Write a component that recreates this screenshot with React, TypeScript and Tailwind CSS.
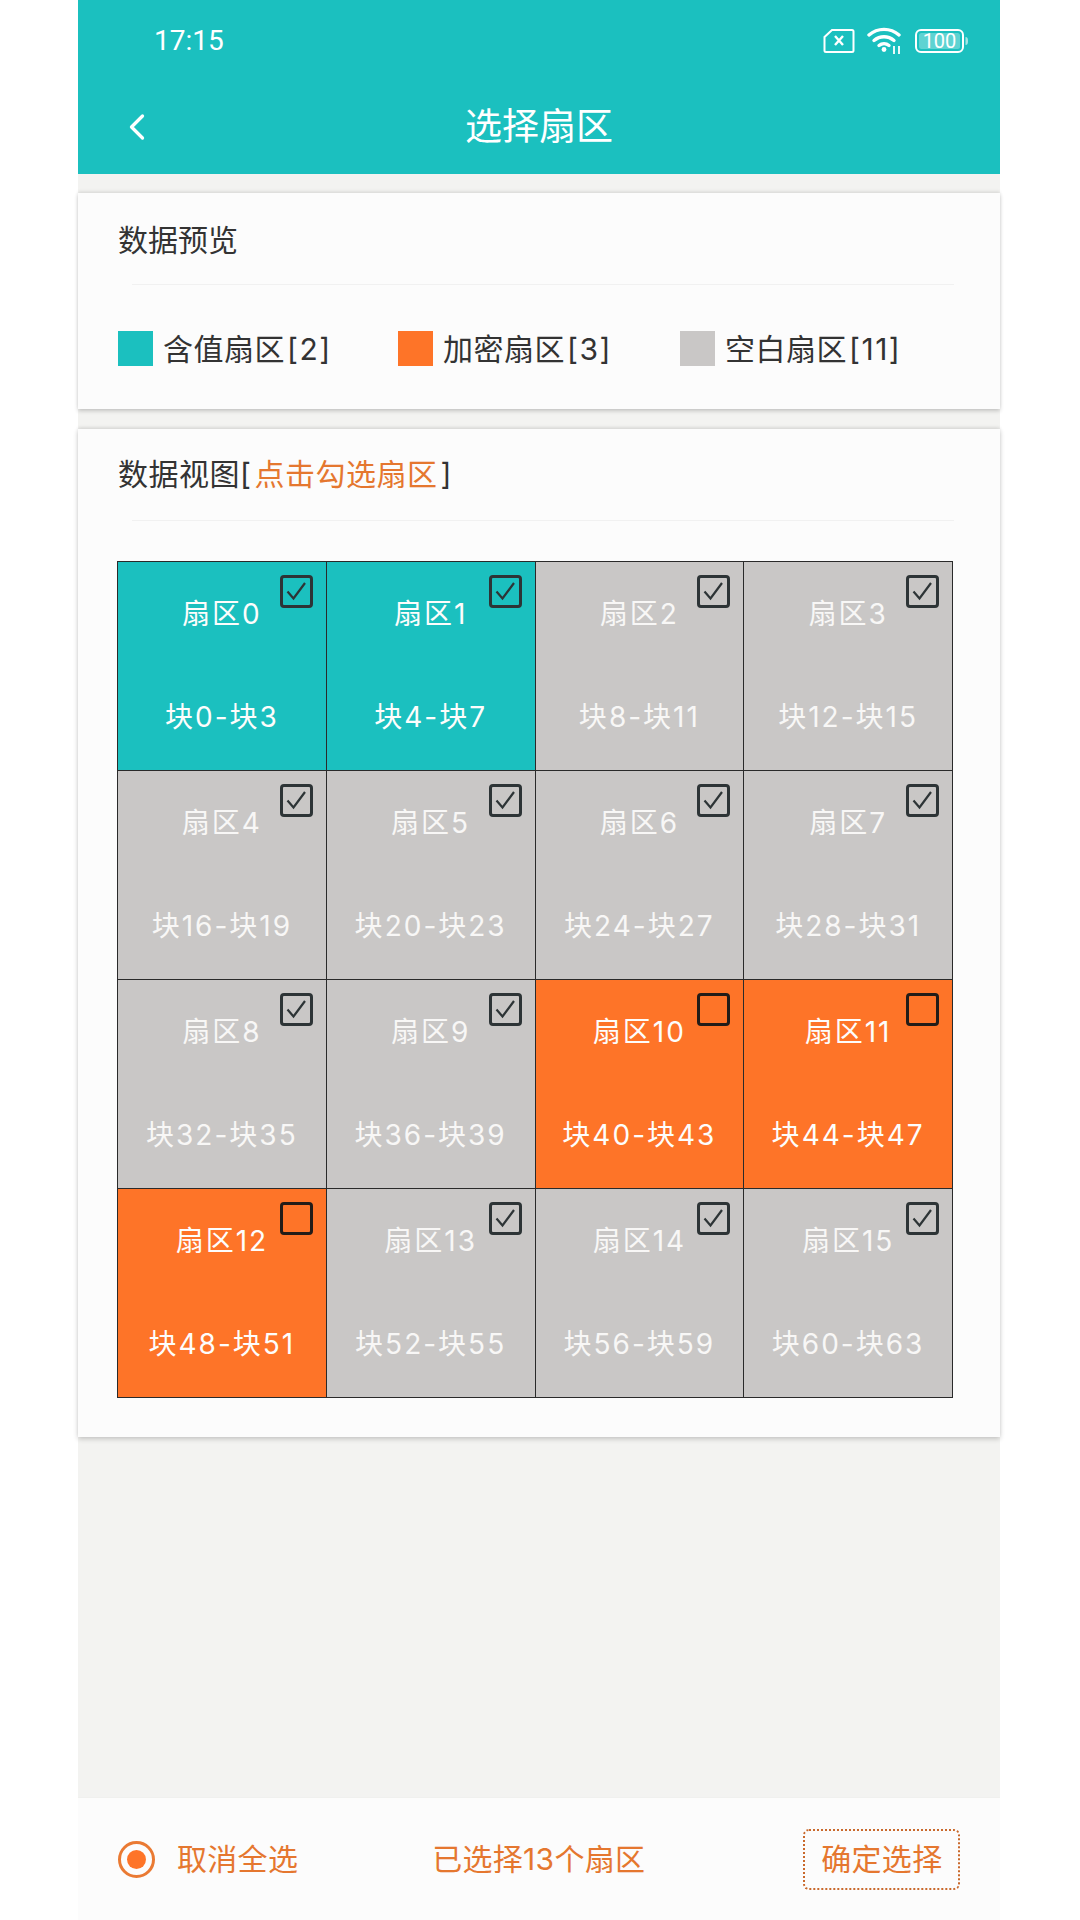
import React from "react";
import { ChevronLeft } from "lucide-react";

type Kind = "value" | "encrypted" | "blank";

const kindBg: Record<Kind, string> = {
  value: "bg-[#1bc0bf]",
  encrypted: "bg-[#fe7428]",
  blank: "bg-[#c9c7c6]",
};

const encrypted = [10, 11, 12];
const sectors = Array.from({ length: 16 }, (_, i) => ({
  id: i,
  kind: (i < 2 ? "value" : encrypted.includes(i) ? "encrypted" : "blank") as Kind,
  checked: !encrypted.includes(i),
}));

const legend = [
  { label: "含值扇区", count: "2", color: "bg-[#1bc0bf]", width: "w-[280px]" },
  { label: "加密扇区", count: "3", color: "bg-[#fe7428]", width: "w-[282px]" },
  { label: "空白扇区", count: "11", color: "bg-[#c9c7c6]", width: "" },
];

const StatusIcons = () => (
  <div className="flex items-center">
    <svg width="32" height="26" viewBox="0 0 32 26" fill="none" stroke="#fff" strokeWidth="2">
      <path d="M9 2h20a1.500 1.500 0 0 1 1.500 1.500v19a1.500 1.500 0 0 1-1.500 1.500H3a1.500 1.500 0 0 1-1.500-1.500V9z" />
      <path d="M12 8l8 9M20 8l-8 9" strokeWidth="2.400" />
    </svg>
    <svg className="ml-[12px]" width="37" height="28" viewBox="0 0 37 28" fill="none" stroke="#fff" strokeWidth="3.400" strokeLinecap="round">
      <path d="M2 8c8.500-7.500 21.500-7.500 30 0" />
      <path d="M7 13.500c6-5 14-5 20 0" />
      <path d="M12 18.500c3-2.500 7-2.500 10 0" />
      <circle cx="17" cy="22.500" r="2.400" fill="#fff" stroke="none" />
      <path d="M27 19v8M32 19v8" strokeWidth="1.800" strokeLinecap="butt" />
    </svg>
    <svg className="ml-[11px]" width="54" height="24" viewBox="0 0 54 24" fill="none">
      <rect x="1" y="1" width="47" height="22" rx="5" stroke="#fff" strokeWidth="2" />
      <rect x="4" y="4" width="41" height="16" rx="2.500" fill="#fff" fillOpacity="0.3" />
      <path d="M50.500 8c2 0 2.500 1.500 2.500 4s-.5 4-2.500 4z" fill="#fff" fillOpacity="0.6" />
      <text x="24.500" y="19" textAnchor="middle" fill="#fff" fontSize="20" fontFamily="Roboto, sans-serif">100</text>
    </svg>
  </div>
);

const Checkbox = ({ checked }: { checked: boolean }) => (
  <div className={`absolute right-[13px] top-[13px] flex h-[33px] w-[33px] items-center justify-center rounded-[4px] border-[3px] ${checked ? "border-[#2d3436]" : "border-[#231c18]"}`}>
    {checked && (
      <svg width="25" height="25" viewBox="0 0 25 25" fill="none" stroke="#2d3436" strokeWidth="2.200">
        <path d="M3.500 12.500l6 7L21 4" />
      </svg>
    )}
  </div>
);

const Cell = ({ id, kind, checked }: { id: number; kind: Kind; checked: boolean }) => (
  <div className={`relative flex h-[209px] flex-col items-center border-r border-b border-[#2a2a2a] pt-[32px] text-[28px] leading-[40px] tracking-[2px] ${kindBg[kind]} ${kind === "blank" ? "text-[#f8f7f6]" : "text-[#fdfdfc]"}`}>
    <Checkbox checked={checked} />
    <span>扇区{id}</span>
    <span className="mt-[63px]">
      块{id * 4}-块{id * 4 + 3}
    </span>
  </div>
);

export default function App() {
  return (
    <div className="min-h-[1920px] bg-white font-['Inter','Noto_Sans_CJK_SC',sans-serif]">
      <div className="ml-[78px] flex h-[1920px] w-[922px] flex-col bg-[#f3f3f1]">
        <header className="h-[174px] shrink-0 bg-[#1bc0bf] text-white">
          <div className="flex items-center justify-between pt-[25px] pr-[31px] pl-[76px] font-['Roboto','Noto_Sans_CJK_SC',sans-serif]">
            <span className="text-[28px] leading-[32px]">17:15</span>
            <StatusIcons />
          </div>
          <div className="relative mt-[40px] flex h-[60px] items-center justify-center">
            <ChevronLeft className="absolute left-[37px]" size={44} strokeWidth={1.800} />
            <span className="text-[37px]">选择扇区</span>
          </div>
        </header>

        <section className="mt-[19px] h-[216px] shrink-0 bg-[#fcfcfc] shadow-[0_-2px_3px_rgba(0,0,0,0.08),0_2px_4px_rgba(0,0,0,0.2)]">
          <div className="pt-[27px] pl-[40px] text-[30px] leading-[40px] text-[#333]">数据预览</div>
          <div className="mt-[24px] mr-[46px] ml-[54px] h-px bg-[#f1f1f1]" />
          <div className="mt-[44px] flex items-center pl-[40px]">
            {legend.map((item) => (
              <div key={item.label} className={`flex items-center ${item.width}`}>
                <div className={`h-[35px] w-[35px] -translate-y-px ${item.color}`} />
                <span className="ml-[10px] text-[30px] leading-[40px] tracking-[0.5px] text-[#333]">
                  {item.label}
                  <span className="ml-[2px] tracking-[1.500px]">[{item.count}]</span>
                </span>
              </div>
            ))}
          </div>
        </section>

        <section className="mt-[20px] h-[1008px] shrink-0 bg-[#fcfcfc] shadow-[0_-2px_3px_rgba(0,0,0,0.08),0_2px_5px_rgba(0,0,0,0.2)]">
          <div className="pt-[25px] pl-[40px] text-[30px] leading-[40px] tracking-[0.5px] text-[#333]">
            数据视图[<span className="mx-[3px] text-[#e5772f]">点击勾选扇区</span>]
          </div>
          <div className="mt-[26px] mr-[46px] ml-[54px] h-px bg-[#f1f1f1]" />
          <div className="mt-[40px] ml-[39px] grid w-[836px] grid-cols-4 border-t border-l border-[#2a2a2a]">
            {sectors.map((s) => (
              <Cell key={s.id} id={s.id} kind={s.kind} checked={s.checked} />
            ))}
          </div>
        </section>

        <footer className="mt-auto flex h-[123px] shrink-0 items-center border-t border-[#f0f0ee] bg-[#fcfcfc] pl-[40px] text-[30px] tracking-[0.3px] text-[#e5772f]">
          <div className="flex h-[37px] w-[37px] items-center justify-center rounded-full border-[3px] border-[#ea7a33]">
            <div className="h-[19px] w-[19px] rounded-full bg-[#fe7428]" />
          </div>
          <span className="ml-[22px]">取消全选</span>
          <span className="ml-[134px]">已选择13个扇区</span>
          <div className="ml-[158px] flex h-[61px] w-[157px] items-center justify-center rounded-[6px] border-2 border-dotted border-[#c9692c]">
            确定选择
          </div>
        </footer>
      </div>
    </div>
  );
}
